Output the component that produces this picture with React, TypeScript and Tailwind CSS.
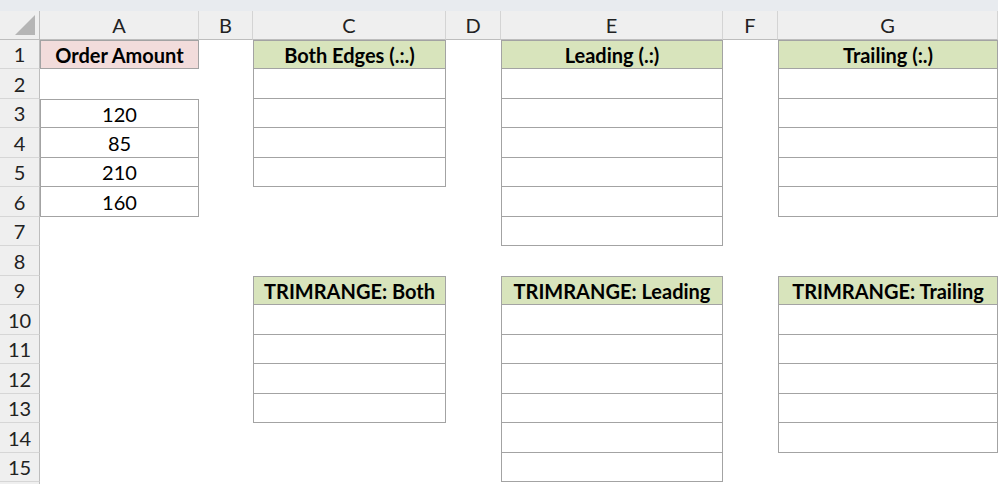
import type React from "react";

// Column letters; the row-number gutter comes first in the grid template
const COLUMNS = ["A", "B", "C", "D", "E", "F", "G"];
const ROW_HEIGHTS = [29, 30, 29, 30, 29, 30, 29, 30, 29, 30, 29, 30, 29, 30, 29, 30];
const VISIBLE_ROWS = 15;

type Fill = "pink" | "green" | undefined;

interface CellSpec {
  text?: string;
  bold?: boolean;
  fill?: Fill;
  boxed?: boolean;
  boxTop?: boolean;
}

// A bordered block: header cell + empty/body cells below it
const block = (
  col: string,
  startRow: number,
  title: string,
  fill: Fill,
  body: (string | undefined)[],
  cells: Record<string, CellSpec>,
) => {
  cells[`${col}${startRow}`] = { text: title, bold: true, fill, boxed: true, boxTop: true };
  body.forEach((value, i) => {
    cells[`${col}${startRow + 1 + i}`] = { text: value, boxed: true };
  });
};

const buildCells = () => {
  const cells: Record<string, CellSpec> = {};
  cells.A1 = { text: "Order Amount", bold: true, fill: "pink", boxed: true, boxTop: true };
  ["120", "85", "210", "160"].forEach((v, i) => {
    cells[`A${3 + i}`] = { text: v, boxed: true, boxTop: i === 0 };
  });
  block("C", 1, "Both Edges (.:.)", "green", Array(4).fill(undefined), cells);
  block("E", 1, "Leading (.:)", "green", Array(6).fill(undefined), cells);
  block("G", 1, "Trailing (:.)", "green", Array(5).fill(undefined), cells);
  block("C", 9, "TRIMRANGE: Both", "green", Array(4).fill(undefined), cells);
  block("E", 9, "TRIMRANGE: Leading", "green", Array(6).fill(undefined), cells);
  block("G", 9, "TRIMRANGE: Trailing", "green", Array(5).fill(undefined), cells);
  return cells;
};

const CELLS = buildCells();

const SelectAll: React.FC = () => (
  <div className="flex items-end justify-end border-r border-b border-[#bdbdbd] bg-[#efefef] pr-[4px] pb-[4px]">
    <svg width="20" height="20" viewBox="0 0 20 20">
      <polygon points="20,0 20,20 0,20" fill="#b5b5b5" />
    </svg>
  </div>
);

const Cell: React.FC<{ spec?: CellSpec }> = ({ spec }) => {
  if (!spec) return <div />;
  const fill =
    spec.fill === "pink" ? "bg-[#f2dcdb]" : spec.fill === "green" ? "bg-[#d8e4bc]" : "bg-white";
  const border = spec.boxed
    ? spec.boxTop
      ? "border border-[#a3a3a3]"
      : "border-x border-b border-[#a3a3a3]"
    : "";
  return (
    <div
      className={`flex items-center justify-center overflow-visible whitespace-nowrap text-[20px] leading-none text-black ${fill} ${border} ${
        spec.bold ? "font-bold" : "font-normal"
      }`}
    >
      {spec.text}
    </div>
  );
};

export default function App() {
  return (
    <div className="h-[484px] w-[998px] overflow-hidden bg-white font-['Lato','Noto_Sans',sans-serif]">
      {/* ribbon edge above the sheet */}
      <div className="h-[11px] bg-[#e8ebef]" />

      <div className="grid grid-cols-[40px_159px_54px_193px_55px_222px_55px_220px] grid-rows-[29px_29px_30px_29px_30px_29px_30px_29px_30px_29px_30px_29px_30px_29px_30px_29px_30px]">
        <SelectAll />
        {COLUMNS.map((c) => (
          <div
            key={c}
            className="flex items-center justify-center border-r border-b border-r-[#d4d4d4] border-b-[#bdbdbd] bg-[#efefef] text-[20px] leading-none text-[#222]"
          >
            {c}
          </div>
        ))}

        {ROW_HEIGHTS.map((_, ri) => {
          const row = ri + 1;
          return [
            <div
              key={`h${row}`}
              className="flex items-center justify-center border-r border-b border-r-[#bdbdbd] border-b-[#d6d6d6] bg-[#efefef] text-[20px] leading-none text-[#222]"
            >
              {row <= VISIBLE_ROWS ? row : null}
            </div>,
            ...COLUMNS.map((c) => <Cell key={`${c}${row}`} spec={CELLS[`${c}${row}`]} />),
          ];
        })}
      </div>
    </div>
  );
}
